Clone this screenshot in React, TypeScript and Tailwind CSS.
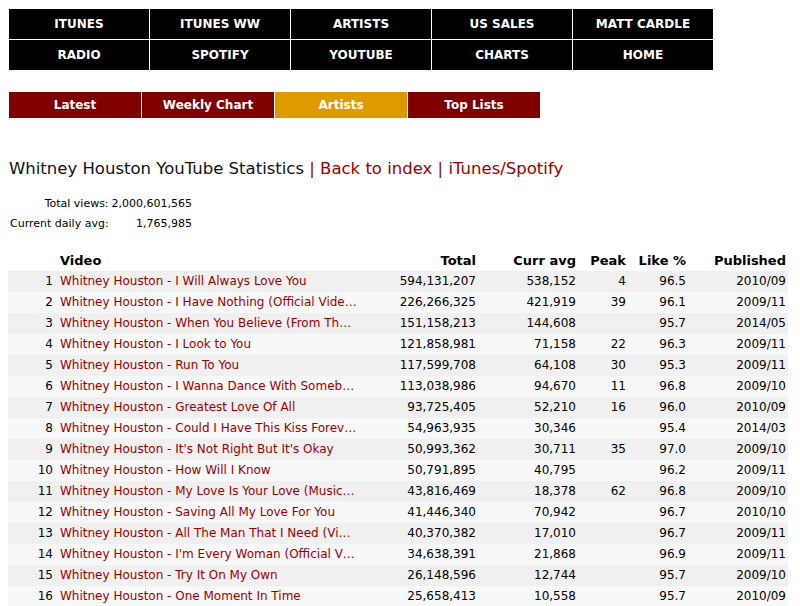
const TOP_NAV = [
  ["ITUNES", "ITUNES WW", "ARTISTS", "US SALES", "MATT CARDLE"],
  ["RADIO", "SPOTIFY", "YOUTUBE", "CHARTS", "HOME"],
];

const SUB_NAV = ["Latest", "Weekly Chart", "Artists", "Top Lists"];

type Row = [string, string, string, string, string, string];

const ROWS: Row[] = [
  ["Whitney Houston - I Will Always Love You", "594,131,207", "538,152", "4", "96.5", "2010/09"],
  ["Whitney Houston - I Have Nothing (Official Vide…", "226,266,325", "421,919", "39", "96.1", "2009/11"],
  ["Whitney Houston - When You Believe (From Th…", "151,158,213", "144,608", "", "95.7", "2014/05"],
  ["Whitney Houston - I Look to You", "121,858,981", "71,158", "22", "96.3", "2009/11"],
  ["Whitney Houston - Run To You", "117,599,708", "64,108", "30", "95.3", "2009/11"],
  ["Whitney Houston - I Wanna Dance With Someb…", "113,038,986", "94,670", "11", "96.8", "2009/10"],
  ["Whitney Houston - Greatest Love Of All", "93,725,405", "52,210", "16", "96.0", "2010/09"],
  ["Whitney Houston - Could I Have This Kiss Forev…", "54,963,935", "30,346", "", "95.4", "2014/03"],
  ["Whitney Houston - It's Not Right But It's Okay", "50,993,362", "30,711", "35", "97.0", "2009/10"],
  ["Whitney Houston - How Will I Know", "50,791,895", "40,795", "", "96.2", "2009/11"],
  ["Whitney Houston - My Love Is Your Love (Music…", "43,816,469", "18,378", "62", "96.8", "2009/10"],
  ["Whitney Houston - Saving All My Love For You", "41,446,340", "70,942", "", "96.7", "2010/10"],
  ["Whitney Houston - All The Man That I Need (Vi…", "40,370,382", "17,010", "", "96.7", "2009/11"],
  ["Whitney Houston - I'm Every Woman (Official V…", "34,638,391", "21,868", "", "96.9", "2009/11"],
  ["Whitney Houston - Try It On My Own", "26,148,596", "12,744", "", "95.7", "2009/10"],
  ["Whitney Houston - One Moment In Time", "25,658,413", "10,558", "", "95.7", "2010/09"],
];

export default function App() {
  return (
    <div className="bg-white text-black font-['DejaVu_Sans',Verdana,sans-serif] px-[9px] pt-[9px]">
      {/* ── Top nav ── */}
      <div className="grid grid-cols-[repeat(5,140px)] gap-px bg-white w-[704px]">
        {TOP_NAV.flat().map((label) => (
          <div
            key={label}
            className="bg-black h-[30px] flex items-center justify-center text-white text-[12px] font-bold"
          >
            {label}
          </div>
        ))}
      </div>

      {/* ── Sub nav ── */}
      <div className="flex gap-px mt-[22px]">
        {SUB_NAV.map((label) => (
          <div
            key={label}
            className={`w-[132px] h-[26px] flex items-center justify-center text-white text-[12px] font-bold
              ${label === "Artists" ? "bg-[#df9a00]" : "bg-[#800000]"}`}
          >
            {label}
          </div>
        ))}
      </div>

      {/* ── Heading ── */}
      <h1 className="mt-[40px] text-[16.5px] leading-[22px] text-[#111] whitespace-nowrap">
        Whitney Houston YouTube Statistics{" "}
        <span className="text-[#990000]">| Back to index | iTunes/Spotify</span>
      </h1>

      {/* ── Totals ── */}
      <table className="mt-[14px] ml-[1px] text-[11px] border-collapse whitespace-nowrap">
        <tbody>
          <tr className="h-[20px]">
            <td className="text-right w-[98px] pr-[3px]">Total views:</td>
            <td className="text-right w-[80px]">2,000,601,565</td>
          </tr>
          <tr className="h-[20px]">
            <td className="text-right pr-[3px]">Current daily avg:</td>
            <td className="text-right">1,765,985</td>
          </tr>
        </tbody>
      </table>

      {/* ── Video table ── */}
      <table className="mt-[17px] -ml-px w-[780px] table-fixed border-collapse text-[12px]">
        <colgroup>
          <col className="w-[47px]" />
          <col className="w-[323px]" />
          <col className="w-[100px]" />
          <col className="w-[100px]" />
          <col className="w-[50px]" />
          <col className="w-[60px]" />
          <col className="w-[100px]" />
        </colgroup>
        <thead>
          <tr className="h-[18px] text-[13px] font-bold">
            <th />
            <th className="text-left pl-[5px]">Video</th>
            <th className="text-right pr-[2px]">Total</th>
            <th className="text-right pr-[2px]">Curr avg</th>
            <th className="text-right pr-[2px]">Peak</th>
            <th className="text-right pr-[2px]">Like %</th>
            <th className="text-right pr-[2px]">Published</th>
          </tr>
        </thead>
        <tbody>
          {ROWS.map((r, i) => (
            <tr
              key={i}
              className={`h-[21px] ${i % 2 === 0 ? "bg-[#f0f0f0]" : "bg-[#f8f8f8]"}`}
            >
              <td className="text-right pr-[2px]">{i + 1}</td>
              <td className="pl-[5px] text-[#990000] whitespace-nowrap overflow-hidden">{r[0]}</td>
              <td className="text-right pr-[2px]">{r[1]}</td>
              <td className="text-right pr-[2px]">{r[2]}</td>
              <td className="text-right pr-[2px]">{r[3]}</td>
              <td className="text-right pr-[2px]">{r[4]}</td>
              <td className="text-right pr-[2px]">{r[5]}</td>
            </tr>
          ))}
        </tbody>
      </table>
    </div>
  );
}
